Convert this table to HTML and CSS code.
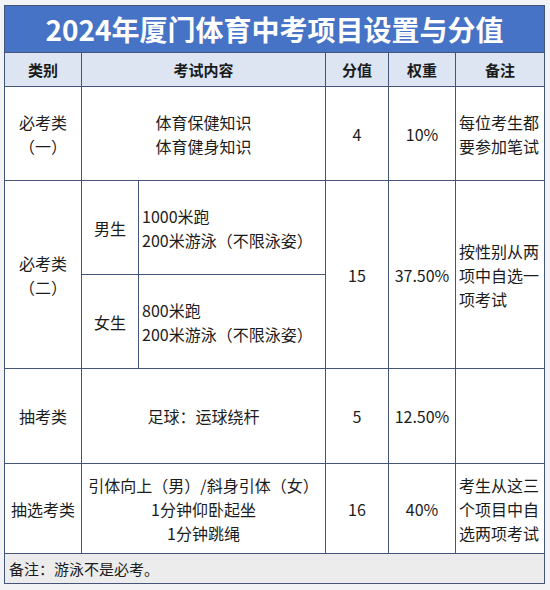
FILE: index.html
```html
<!DOCTYPE html>
<html lang="zh-CN">
<head>
<meta charset="utf-8">
<title>2024年厦门体育中考项目设置与分值</title>
<link rel="stylesheet" href="styles.css">
</head>
<body>
<div class="sheet">
  <table class="grid">
    <colgroup>
      <col class="c-cat">
      <col class="c-sub">
      <col class="c-content">
      <col class="c-score">
      <col class="c-weight">
      <col class="c-note">
    </colgroup>
    <tr class="r-title">
      <th colspan="6" class="title">2024年厦门体育中考项目设置与分值</th>
    </tr>
    <tr class="r-head">
      <th>类别</th>
      <th colspan="2">考试内容</th>
      <th>分值</th>
      <th>权重</th>
      <th>备注</th>
    </tr>
    <tr class="r-1">
      <td>必考类<br>（一）</td>
      <td colspan="2">体育保健知识<br>体育健身知识</td>
      <td>4</td>
      <td>10%</td>
      <td class="note">每位考生都<br>要参加笔试</td>
    </tr>
    <tr class="r-2a">
      <td rowspan="2">必考类<br>（二）</td>
      <td>男生</td>
      <td class="left">1000米跑<br>200米游泳（不限泳姿）</td>
      <td rowspan="2">15</td>
      <td rowspan="2">37.50%</td>
      <td rowspan="2" class="note">按性别从两<br>项中自选一<br>项考试</td>
    </tr>
    <tr class="r-2b">
      <td>女生</td>
      <td class="left">800米跑<br>200米游泳（不限泳姿）</td>
    </tr>
    <tr class="r-3">
      <td>抽考类</td>
      <td colspan="2">足球：运球绕杆</td>
      <td>5</td>
      <td>12.50%</td>
      <td class="note"></td>
    </tr>
    <tr class="r-4">
      <td>抽选考类</td>
      <td colspan="2">引体向上（男）/斜身引体（女）<br>1分钟仰卧起坐<br>1分钟跳绳</td>
      <td>16</td>
      <td>40%</td>
      <td class="note">考生从这三<br>个项目中自<br>选两项考试</td>
    </tr>
    <tr class="r-foot">
      <td colspan="6" class="footnote">备注：游泳不是必考。</td>
    </tr>
  </table>
</div>
</body>
</html>
```
FILE: styles.css
```css
html, body {
  margin: 0;
  padding: 0;
  background: #f2f3f5;
}

body {
  font-family: "Noto Sans CJK SC", "Noto Sans", sans-serif;
  color: #1c1c1c;
}

.sheet {
  padding: 5px 6px 0 4px;
}

.grid {
  width: 540px;
  border-collapse: collapse;
  table-layout: fixed;
  background: #ffffff;
}

.c-cat { width: 77px; }
.c-sub { width: 57px; }
.c-content { width: 187px; }
.c-score { width: 63px; }
.c-weight { width: 67px; }
.c-note { width: 89px; }

.grid th,
.grid td {
  border: 1px solid #45557a;
  padding: 0 2px;
  text-align: center;
  vertical-align: middle;
  font-size: 16px;
  line-height: 24px;
  font-weight: 400;
}

.grid .title {
  background: #4673c5;
  color: #ffffff;
  font-size: 28px;
  font-weight: 700;
  line-height: 34px;
  padding: 0;
}

.r-title { height: 47px; }

.r-head th {
  background: #dce5f1;
  font-size: 15px;
  font-weight: 700;
  color: #1a1a1a;
}

.r-head { height: 34px; }
.r-1 { height: 94px; }
.r-2a { height: 94px; }
.r-2b { height: 94px; }
.r-3 { height: 95px; }
.r-4 { height: 90px; }
.r-foot { height: 30px; }

.grid td.left {
  text-align: left;
  padding-left: 3px;
}

.grid td.note {
  text-align: left;
  padding-left: 3px;
  padding-right: 0;
}

.grid td.footnote {
  background: #ececec;
  text-align: left;
  font-size: 15px;
  padding-left: 4px;
}
```
